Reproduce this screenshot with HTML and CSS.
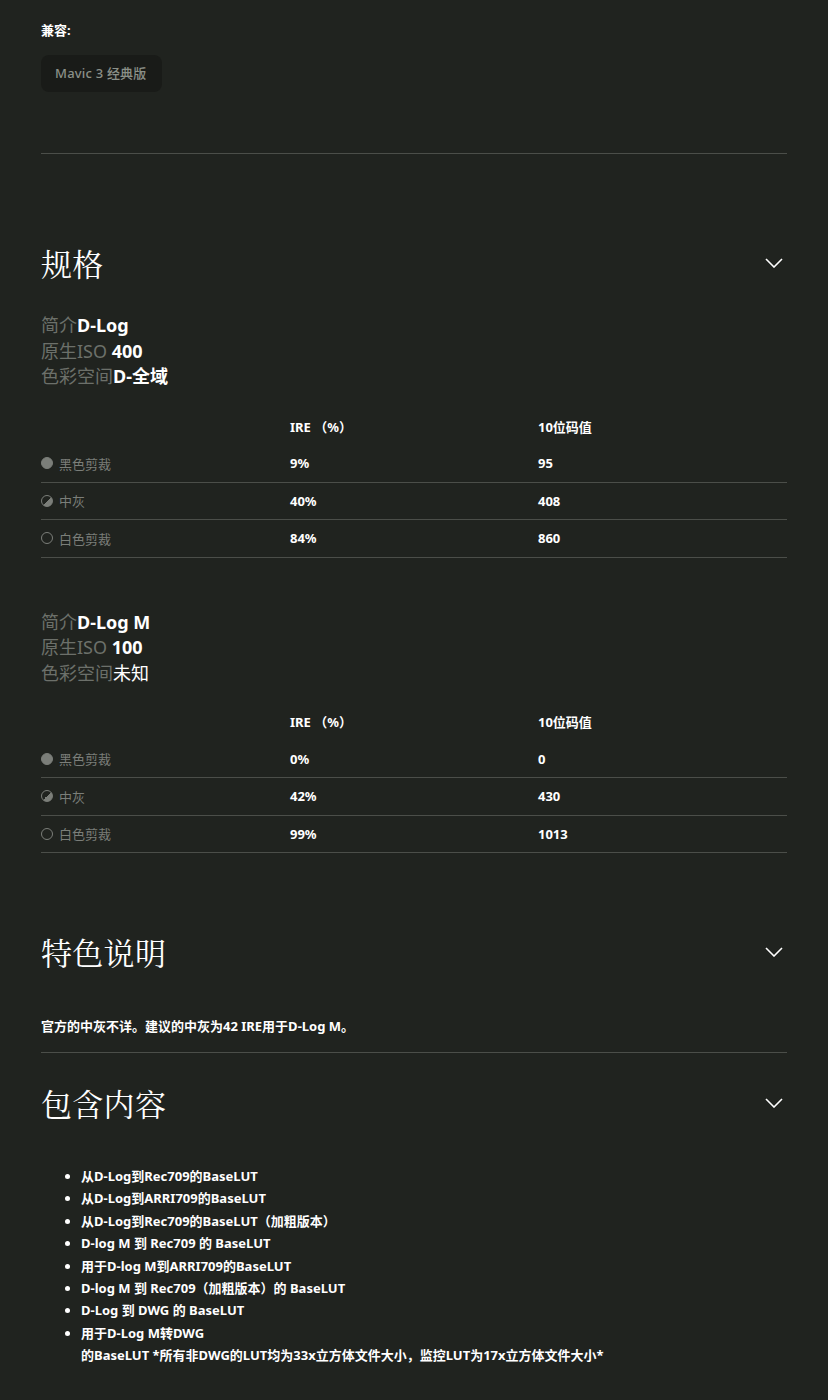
FILE: index.html
```html
<!DOCTYPE html>
<html lang="zh-CN">
<head>
<meta charset="utf-8">
<title>D-Log</title>
<link rel="stylesheet" href="styles.css">
</head>
<body>
<div class="page">
  <div class="compat">
    <div class="compat-title">兼容:</div>
    <div class="pill">Mavic 3 经典版</div>
  </div>
  <hr class="divider">

  <section class="section spec-section">
    <div class="sec-head">
      <h2>规格</h2>
      <svg class="chev" width="18" height="10" viewBox="0 0 18 10"><path d="M1 1 L9 9 L17 1" fill="none" stroke="#fff" stroke-width="1.6"/></svg>
    </div>

    <div class="spec">
      <div><span class="lbl">简介</span><b>D-Log</b></div>
      <div><span class="lbl">原生ISO </span><b>400</b></div>
      <div><span class="lbl">色彩空间</span><b>D-全域</b></div>
    </div>
    <div class="table">
      <div class="row head"><div></div><div>IRE （%）</div><div>10位码值</div></div>
      <div class="row"><div class="name"><span class="ic ic-black"></span>黑色剪裁</div><div>9%</div><div>95</div></div>
      <div class="row"><div class="name"><span class="ic ic-mid"></span>中灰</div><div>40%</div><div>408</div></div>
      <div class="row"><div class="name"><span class="ic ic-white"></span>白色剪裁</div><div>84%</div><div>860</div></div>
    </div>

    <div class="spec spec2">
      <div><span class="lbl">简介</span><b>D-Log M</b></div>
      <div><span class="lbl">原生ISO </span><b>100</b></div>
      <div><span class="lbl">色彩空间</span><b class="thin">未知</b></div>
    </div>
    <div class="table">
      <div class="row head"><div></div><div>IRE （%）</div><div>10位码值</div></div>
      <div class="row"><div class="name"><span class="ic ic-black"></span>黑色剪裁</div><div>0%</div><div>0</div></div>
      <div class="row"><div class="name"><span class="ic ic-mid"></span>中灰</div><div>42%</div><div>430</div></div>
      <div class="row"><div class="name"><span class="ic ic-white"></span>白色剪裁</div><div>99%</div><div>1013</div></div>
    </div>
  </section>

  <section class="section feat-section">
    <div class="sec-head">
      <h2>特色说明</h2>
      <svg class="chev" width="18" height="10" viewBox="0 0 18 10"><path d="M1 1 L9 9 L17 1" fill="none" stroke="#fff" stroke-width="1.6"/></svg>
    </div>
    <p class="feat-text">官方的中灰不详。建议的中灰为42 IRE用于D-Log M。</p>
  </section>
  <hr class="divider">

  <section class="section inc-section">
    <div class="sec-head">
      <h2>包含内容</h2>
      <svg class="chev" width="18" height="10" viewBox="0 0 18 10"><path d="M1 1 L9 9 L17 1" fill="none" stroke="#fff" stroke-width="1.6"/></svg>
    </div>
    <ul class="inc-list">
      <li>从D-Log到Rec709的BaseLUT</li>
      <li>从D-Log到ARRI709的BaseLUT</li>
      <li>从D-Log到Rec709的BaseLUT（加粗版本）</li>
      <li>D-log M 到 Rec709 的 BaseLUT</li>
      <li>用于D-log M到ARRI709的BaseLUT</li>
      <li>D-log M 到 Rec709（加粗版本）的 BaseLUT</li>
      <li>D-Log 到 DWG 的 BaseLUT</li>
      <li>用于D-Log M转DWG<br>的BaseLUT *所有非DWG的LUT均为33x立方体文件大小，监控LUT为17x立方体文件大小*</li>
    </ul>
  </section>
</div>
</body>
</html>
```

FILE: styles.css
```css
* { box-sizing: border-box; }
html, body {
  margin: 0;
  padding: 0;
  background: #20231f;
}
body {
  font-family: "Noto Sans", "Noto Sans CJK SC", sans-serif;
  color: #ffffff;
}
.page {
  padding: 0 41px 40px;
  width: 828px;
}
.compat { padding-top: 20px; }
.compat-title {
  font-size: 13px;
  font-weight: 700;
  line-height: 20px;
}
.pill {
  display: inline-block;
  margin-top: 15px;
  height: 37px;
  line-height: 37px;
  padding: 0 15px 0 14px;
  background: #191b18;
  border-radius: 8px;
  color: #8b9088;
  font-size: 13px;
  font-weight: 500;
  letter-spacing: 0.2px;
}
.divider {
  border: 0;
  border-top: 1px solid #4b4e49;
  margin: 0;
}
.compat + .divider { margin-top: 61px; }

.sec-head {
  display: flex;
  justify-content: space-between;
  align-items: center;
  height: 40px;
}
.sec-head h2 {
  margin: 0;
  font-family: "Noto Serif CJK SC", "Liberation Serif", serif;
  font-weight: 400;
  font-size: 31px;
  line-height: 40px;
  letter-spacing: 0.3px;
}
.chev { margin-right: 4px; }

.spec-section { padding-top: 89px; }
.spec {
  margin-top: 30px;
  font-size: 18px;
  line-height: 25.5px;
}
.spec .lbl { color: #6c706a; }
.spec b { font-weight: 700; }
.spec b.thin { font-weight: 400; }
.spec2 { margin-top: 52px; }

.table { margin-top: 18px; }
.spec2 + .table { margin-top: 17px; }
.row {
  display: grid;
  grid-template-columns: 249px 248px 1fr;
  height: 37.5px;
  align-items: center;
  font-size: 13px;
  font-weight: 700;
  border-bottom: 1px solid #4b4e49;
}
.row.head { border-bottom: 0; }
.row .name {
  display: flex;
  align-items: center;
  font-weight: 400;
  color: #7b7e79;
}
.ic {
  width: 12px;
  height: 12px;
  border-radius: 50%;
  margin-right: 6px;
  flex: none;
  border: 1px solid #7b7e79;
}
.ic-black { background: #7b7e79; }
.ic-mid { background: linear-gradient(135deg, transparent 50%, #7b7e79 50%); }
.ic-white { background: transparent; }

.feat-section { padding-top: 79px; }
.feat-text {
  margin: 44px 0 16px;
  font-size: 13px;
  font-weight: 700;
  line-height: 20px;
}

.inc-section { padding-top: 30px; }
.inc-list {
  margin: 42px 0 0;
  padding-left: 40px;
  font-size: 13px;
  font-weight: 700;
  line-height: 22.4px;
}
```
